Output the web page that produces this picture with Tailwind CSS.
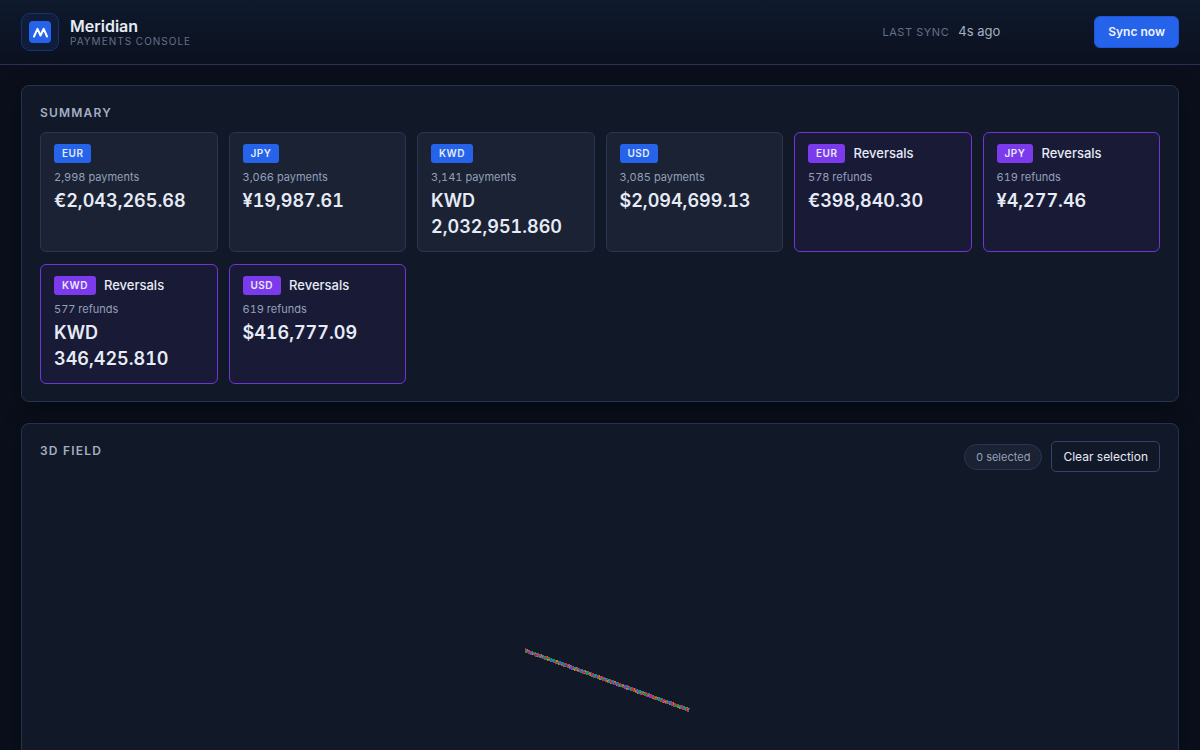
<!DOCTYPE html>
<html lang="en">
<head>
  <meta charset="UTF-8">
  <meta name="viewport" content="width=device-width, initial-scale=1">
  <title>Meridian Payments Console</title>
  <script src="https://cdn.jsdelivr.net/npm/@tailwindcss/browser@4"></script>
</head>
<body class="min-h-screen bg-[#0a0f1b] font-['Inter','Liberation_Sans',sans-serif] text-[#e6ebf5] overflow-x-hidden">

  <header class="flex items-center justify-between border-b border-[#263350] bg-linear-to-b from-[#0e1a2d] to-[#0b101e] px-[21px] py-[13px]">
    <div class="flex items-center gap-[11px]">
      <div class="flex size-[38px] items-center justify-center rounded-[9px] border border-[#17346f] bg-[#0f1d3a]">
        <svg class="size-[22px]" viewBox="0 0 22 22" fill="none" aria-hidden="true">
          <rect width="22" height="22" rx="4" fill="#2563eb" />
          <path d="M5 15.5L8.5 7.8L11.5 14.5L14.7 7.8L18 15.5" stroke="#fff" stroke-width="2" stroke-linecap="round" stroke-linejoin="round" />
        </svg>
      </div>
      <div>
        <h1 class="text-[16px] leading-[17px] font-semibold">Meridian</h1>
        <p class="text-[10px] leading-[12px] tracking-widest text-[#64708b]">PAYMENTS CONSOLE</p>
      </div>
    </div>
    <div class="flex items-center gap-[94px]">
      <div class="flex items-center gap-[9px]">
        <span class="text-[11px] tracking-wider text-[#64708b]">LAST SYNC</span>
        <span class="text-[13px] text-[#a3aec4]">4s ago</span>
      </div>
      <button class="h-8 rounded-[6px] border border-[#1d56d8] bg-[#2563eb] px-[13px] text-[12px] font-semibold text-[#f0f4ff]">Sync now</button>
    </div>
  </header>

  <main class="flex flex-col gap-[21px] px-[21px] py-5">

    <!-- Summary -->
    <section class="rounded-[8px] border border-[#263350] bg-[#111827] px-[18px] pt-5 pb-[17px] shadow-[0_6px_22px_rgba(0,0,0,0.35)]">
      <h2 class="mb-3 text-[12px] leading-[14px] font-semibold tracking-widest text-[#a3aec4]">SUMMARY</h2>
      <div class="grid grid-cols-6 gap-x-[11px] gap-y-[12px] tabular-nums">
        <article class="rounded-[6px] border border-[#293652] bg-[#1a2234] px-[13px] py-[11px]">
          <div class="flex items-center"><span class="rounded-[3px] bg-[#2563eb] px-2 text-[10px] leading-[19px] font-semibold tracking-wider">EUR</span></div>
          <p class="mt-1 text-[11px] leading-[21px] text-[#94a0b8]">2,998 payments</p>
          <p class="text-[18px] leading-[26px] font-semibold">€2,043,265.68</p>
        </article>
        <article class="rounded-[6px] border border-[#293652] bg-[#1a2234] px-[13px] py-[11px]">
          <div class="flex items-center"><span class="rounded-[3px] bg-[#2563eb] px-2 text-[10px] leading-[19px] font-semibold tracking-wider">JPY</span></div>
          <p class="mt-1 text-[11px] leading-[21px] text-[#94a0b8]">3,066 payments</p>
          <p class="text-[18px] leading-[26px] font-semibold">¥19,987.61</p>
        </article>
        <article class="rounded-[6px] border border-[#293652] bg-[#1a2234] px-[13px] py-[11px]">
          <div class="flex items-center"><span class="rounded-[3px] bg-[#2563eb] px-2 text-[10px] leading-[19px] font-semibold tracking-wider">KWD</span></div>
          <p class="mt-1 text-[11px] leading-[21px] text-[#94a0b8]">3,141 payments</p>
          <p class="text-[18px] leading-[26px] font-semibold">KWD 2,032,951.860</p>
        </article>
        <article class="rounded-[6px] border border-[#293652] bg-[#1a2234] px-[13px] py-[11px]">
          <div class="flex items-center"><span class="rounded-[3px] bg-[#2563eb] px-2 text-[10px] leading-[19px] font-semibold tracking-wider">USD</span></div>
          <p class="mt-1 text-[11px] leading-[21px] text-[#94a0b8]">3,085 payments</p>
          <p class="text-[18px] leading-[26px] font-semibold">$2,094,699.13</p>
        </article>
        <article class="rounded-[6px] border border-[#7035d6] bg-[#181a36] px-[13px] py-[11px]">
          <div class="flex items-center gap-2"><span class="rounded-[3px] bg-[#7c3aed] px-2 text-[10px] leading-[19px] font-semibold tracking-wider">EUR</span><span class="text-[13px] leading-[19px] font-medium">Reversals</span></div>
          <p class="mt-1 text-[11px] leading-[21px] text-[#94a0b8]">578 refunds</p>
          <p class="text-[18px] leading-[26px] font-semibold">€398,840.30</p>
        </article>
        <article class="rounded-[6px] border border-[#7035d6] bg-[#181a36] px-[13px] py-[11px]">
          <div class="flex items-center gap-2"><span class="rounded-[3px] bg-[#7c3aed] px-2 text-[10px] leading-[19px] font-semibold tracking-wider">JPY</span><span class="text-[13px] leading-[19px] font-medium">Reversals</span></div>
          <p class="mt-1 text-[11px] leading-[21px] text-[#94a0b8]">619 refunds</p>
          <p class="text-[18px] leading-[26px] font-semibold">¥4,277.46</p>
        </article>
        <article class="rounded-[6px] border border-[#7035d6] bg-[#181a36] px-[13px] py-[11px]">
          <div class="flex items-center gap-2"><span class="rounded-[3px] bg-[#7c3aed] px-2 text-[10px] leading-[19px] font-semibold tracking-wider">KWD</span><span class="text-[13px] leading-[19px] font-medium">Reversals</span></div>
          <p class="mt-1 text-[11px] leading-[21px] text-[#94a0b8]">577 refunds</p>
          <p class="text-[18px] leading-[26px] font-semibold">KWD 346,425.810</p>
        </article>
        <article class="rounded-[6px] border border-[#7035d6] bg-[#181a36] px-[13px] py-[11px]">
          <div class="flex items-center gap-2"><span class="rounded-[3px] bg-[#7c3aed] px-2 text-[10px] leading-[19px] font-semibold tracking-wider">USD</span><span class="text-[13px] leading-[19px] font-medium">Reversals</span></div>
          <p class="mt-1 text-[11px] leading-[21px] text-[#94a0b8]">619 refunds</p>
          <p class="text-[18px] leading-[26px] font-semibold">$416,777.09</p>
        </article>
      </div>
    </section>

    <!-- 3D field -->
    <section class="rounded-[8px] border border-[#263350] bg-[#111827] px-[18px] py-[17px] shadow-[0_6px_22px_rgba(0,0,0,0.35)]">
      <div class="flex items-start justify-between">
        <h2 class="mt-[3px] text-[12px] leading-[14px] font-semibold tracking-widest text-[#a3aec4]">3D FIELD</h2>
        <div class="flex items-center gap-[9px]">
          <span class="rounded-full border border-[#293652] bg-[#1a2234] px-[11px] text-[11px] leading-[24px] tabular-nums text-[#94a0b8]">0 selected</span>
          <button class="h-[31px] rounded-[5px] border border-[#33426a] px-[11px] text-[12px]">Clear selection</button>
        </div>
      </div>
      <!-- the points project to a thin diagonal band -->
      <svg class="mt-3 h-[400px] w-full" viewBox="0 0 1120 400" preserveAspectRatio="xMidYMin" fill="none" stroke-width="1.3" shape-rendering="crispEdges" role="img" aria-label="3D field">
        <path d="M485 166.5L649 226" stroke="#0b9a6f" stroke-width="3.6" />
        <g stroke="#7c3aed">
          <path d="M485 165L649 224.5" stroke-dasharray="2 7 1 4 3 9 2 5" />
          <path d="M485 166L649 225.5" stroke-dasharray="1 5 3 11 2 3 1 8" stroke-dashoffset="4" />
          <path d="M485 167L649 226.5" stroke-dasharray="3 8 1 3 2 6 2 10" stroke-dashoffset="9" />
          <path d="M485 168L649 227.5" stroke-dasharray="2 5 4 9 1 4" stroke-dashoffset="2" />
        </g>
        <g stroke="#dc2626">
          <path d="M485 165L649 224.5" stroke-dasharray="1 3 2 6 1 8 3 4" stroke-dashoffset="6" />
          <path d="M485 166L649 225.5" stroke-dasharray="2 6 1 3 2 9" stroke-dashoffset="13" />
          <path d="M485 167L649 226.5" stroke-dasharray="1 4 3 7 2 5" stroke-dashoffset="3" />
          <path d="M485 168L649 227.5" stroke-dasharray="2 7 2 3 1 6" stroke-dashoffset="11" />
        </g>
        <g stroke="#d97706">
          <path d="M485 165L649 224.5" stroke-dasharray="1 9 2 13 1 5" stroke-dashoffset="8" />
          <path d="M485 166L649 225.5" stroke-dasharray="2 11 1 6 1 14" stroke-dashoffset="2" />
          <path d="M485 167L649 226.5" stroke-dasharray="1 7 2 12 1 8" stroke-dashoffset="15" />
          <path d="M485 168L649 227.5" stroke-dasharray="2 10 1 5 1 9" stroke-dashoffset="5" />
        </g>
        <g stroke="#3f4a63">
          <path d="M485 165L649 224.5" stroke-dasharray="1 12 1 16" stroke-dashoffset="3" />
          <path d="M485 167L649 226.5" stroke-dasharray="1 11 1 19" stroke-dashoffset="1" />
        </g>
      </svg>
    </section>

  </main>

</body>
</html>
